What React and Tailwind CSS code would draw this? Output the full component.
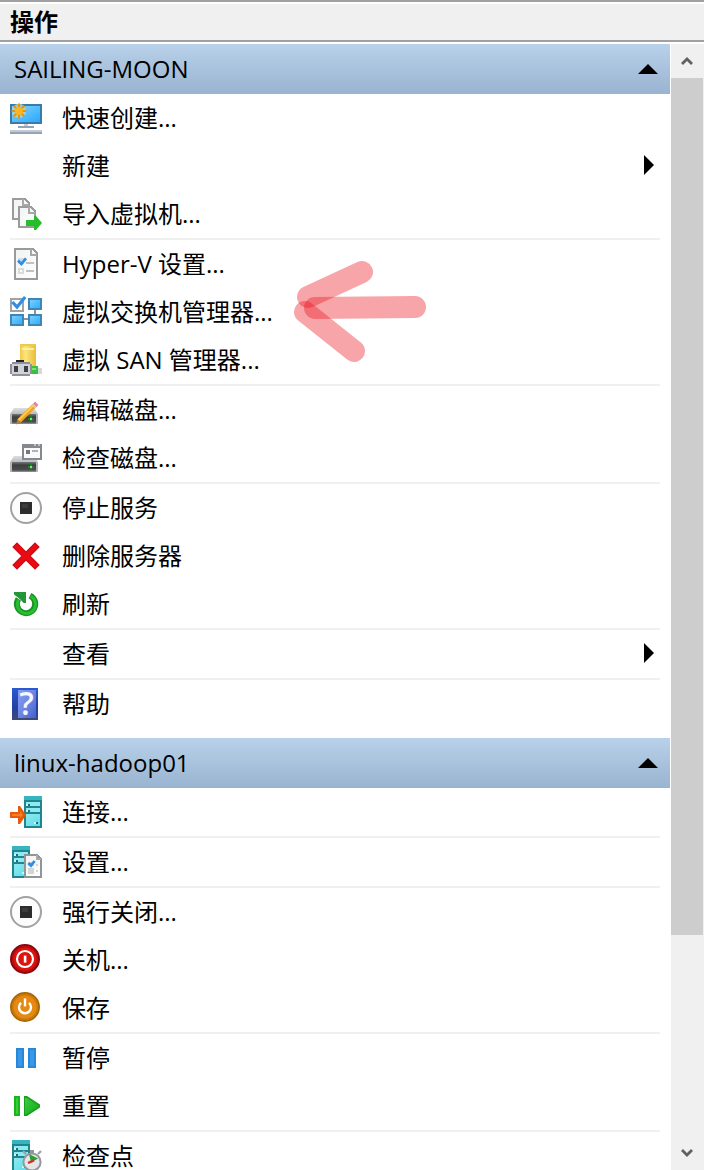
import React from "react";

const FONT =
  "font-['Open_Sans','Noto_Sans_CJK_SC',sans-serif]";

function Icon({ children, smooth }) {
  return (
    <svg
      viewBox="0 0 16 16"
      className="size-8 overflow-visible"
      aria-hidden="true"
      shapeRendering={smooth ? "auto" : "crispEdges"}
    >
      {children}
    </svg>
  );
}

function Gradients() {
  return (
    <svg className="absolute size-0" aria-hidden="true">
      <defs>
        <linearGradient id="screen" x1="0" y1="0" x2="1" y2="1">
          <stop offset="0" stopColor="#8ad4fb" />
          <stop offset="0.45" stopColor="#5ac0fd" />
          <stop offset="1" stopColor="#2aa9ff" />
        </linearGradient>
        <linearGradient id="gold" x1="0" y1="0" x2="1" y2="0">
          <stop offset="0" stopColor="#f0c94a" />
          <stop offset="0.35" stopColor="#fbe57c" />
          <stop offset="1" stopColor="#e9bc36" />
        </linearGradient>
        <linearGradient id="diskFront" x1="0" y1="0" x2="0" y2="1">
          <stop offset="0" stopColor="#77797b" />
          <stop offset="0.3" stopColor="#3c3e40" />
          <stop offset="0.8" stopColor="#4a4c4e" />
          <stop offset="1" stopColor="#9a9c9e" />
        </linearGradient>
        <linearGradient id="diskTop" x1="0" y1="0" x2="0" y2="1">
          <stop offset="0" stopColor="#dcdee0" />
          <stop offset="1" stopColor="#b9bcbf" />
        </linearGradient>
        <linearGradient id="paper" x1="0" y1="0" x2="1" y2="1">
          <stop offset="0" stopColor="#f1f2f2" />
          <stop offset="1" stopColor="#ffffff" />
        </linearGradient>
        <linearGradient id="book" x1="0" y1="0" x2="1" y2="1">
          <stop offset="0" stopColor="#8a9df0" />
          <stop offset="0.5" stopColor="#6d86e4" />
          <stop offset="1" stopColor="#3f62cf" />
        </linearGradient>
        <linearGradient id="spine" x1="0" y1="0" x2="0" y2="1">
          <stop offset="0" stopColor="#2a5bd0" />
          <stop offset="0.6" stopColor="#2240a4" />
          <stop offset="1" stopColor="#404a70" />
        </linearGradient>
        <linearGradient id="cyan" x1="0" y1="0" x2="1" y2="1">
          <stop offset="0" stopColor="#8deaf1" />
          <stop offset="1" stopColor="#5fdde8" />
        </linearGradient>
        <linearGradient id="go" x1="0" y1="0" x2="1" y2="1">
          <stop offset="0" stopColor="#3fca45" />
          <stop offset="1" stopColor="#0fae12" />
        </linearGradient>
      </defs>
    </svg>
  );
}

function Check({ d, width = 1.4 }) {
  return (
    <path d={d} fill="none" stroke="#2f8fe4" strokeWidth={width} shapeRendering="auto" />
  );
}

function Server({ x }) {
  return (
    <g transform={`translate(${x} 0)`} shapeRendering="crispEdges">
      <rect width="9" height="16" fill="#22858d" />
      <rect width="9" height="2" fill="#35b5c0" />
      <rect x="1" y="3" width="7" height="2" fill="#8deaf1" />
      <rect x="1" y="6" width="7" height="2" fill="#8deaf1" />
      <rect x="1" y="9" width="7" height="6" fill="url(#cyan)" />
      <path d="M2 4h1v1H2zM2 7h1v1H2zM6 13h1v1H6z" fill="#1b6d78" />
      <path d="M1 4h1v1H1zM1 7h1v1H1zM5 13h1v1H5z" fill="#c6fafc" />
    </g>
  );
}

function Disk() {
  return (
    <>
      <path d="M2 7h10l2 3H0z" fill="url(#diskTop)" shapeRendering="auto" />
      <rect y="10" width="14" height="5" fill="url(#diskFront)" />
      <path d="M0 10h1v5H0zM13 10h1v5h-1z" fill="#b4b7ba" />
      <rect x="9" y="12" width="3" height="1" fill="#27792b" />
      <rect x="10" y="11" width="1" height="3" fill="#27792b" />
      <rect x="10" y="12" width="1" height="1" fill="#59ff5c" />
    </>
  );
}

function QuickCreateIcon() {
  return (
    <Icon>
      <rect y="1" width="16" height="10" fill="#3a7ca6" />
      <rect x="1" y="2" width="14" height="8" fill="url(#screen)" />
      <g shapeRendering="auto">
        <circle cx="4.500" cy="4.500" r="3.600" fill="#b4d3c8" opacity=".8" />
        <path
          d="M4.500 .8v7.400M.8 4.500h7.400M1.900 1.900l5.200 5.200M7.100 1.900L1.900 7.100"
          stroke="#e3930f"
          strokeWidth="1"
        />
        <circle cx="4.500" cy="4.500" r="2" fill="#fbb51f" />
      </g>
      <rect x="7" y="11" width="2" height="1" fill="#c5cdd6" />
      <rect x="4" y="12" width="8" height="1" fill="#94a3b8" />
      <rect y="14" width="16" height="1" fill="#c2cbd3" />
      <rect y="15" width="16" height="1" fill="#94a3b8" />
    </Icon>
  );
}

function ImportIcon() {
  return (
    <Icon>
      <path d="M1.500 .5h6l2 2v8h-8z" fill="url(#paper)" stroke="#9b9b9b" />
      <path d="M6.500 .5v3h3" fill="none" stroke="#a8a8a8" />
      <path d="M4.500 4.500h6l2 2v8h-8z" fill="url(#paper)" stroke="#9b9b9b" />
      <path d="M9.500 4.500v3h3" fill="none" stroke="#a8a8a8" />
      <path d="M8 11h4V9h1l3 3.500-3 3.500h-1v-2H8z" fill="#25bd2a" shapeRendering="auto" />
    </Icon>
  );
}

function ChecklistIcon() {
  return (
    <Icon>
      <path d="M2.500 .5h9l2 2v13h-11z" fill="url(#paper)" stroke="#999b9b" />
      <path d="M10.500 .5v3h3" fill="none" stroke="#a5a7a7" />
      <path d="M4 5h3v3H4zM4 10h3v3H4z" fill="#dadcdc" />
      <rect x="5" y="11" width="1" height="1" fill="#fff" />
      <path d="M8 7h4v1H8zM8 11h4v1H8z" fill="#c0c2c2" />
      <Check d="M4 6.300l1.700 1.700L8 5.200" />
    </Icon>
  );
}

function SwitchIcon() {
  return (
    <Icon>
      <path d="M7 11h2v1H7zM12 7h1v2h-1z" fill="#8c959c" />
      <rect x=".5" y="1.500" width="6" height="6" fill="#fff" stroke="#a2a2a2" />
      <rect x="9.500" y="1.500" width="6" height="5" fill="url(#screen)" stroke="#3d86b5" />
      <rect x=".5" y="9.500" width="6" height="5" fill="url(#screen)" stroke="#3d86b5" />
      <rect x="9.500" y="9.500" width="6" height="5" fill="url(#screen)" stroke="#3d86b5" />
      <Check d="M1.200 3l2.300 2.500L7.600 .5" width={1.6} />
    </Icon>
  );
}

function SanIcon() {
  return (
    <Icon>
      <rect x="5" width="8" height="11" fill="url(#gold)" />
      <rect x="5" width="8" height="1" fill="#ecca4c" />
      <rect x="6" y="2" width="6" height="1" fill="#fff0a4" />
      <rect x="3" y="8" width="4" height="1" fill="#222" />
      <path d="M1 9h9v1h1v5h-1v1H1v-1H0v-5h1z" fill="#8f9197" />
      <path d="M1 10h9v5H1z" fill="#d0d2d8" />
      <path d="M2 11h2v3H2zM7 11h2v3H7z" fill="#3c3f43" />
      <rect x="11" y="11" width="3" height="4" fill="#3fbd43" />
      <rect x="11" y="12" width="2" height="1" fill="#7be07e" />
      <rect x="14" y="12" width="2" height="3" fill="#d4dbd5" />
    </Icon>
  );
}

function EditDiskIcon() {
  return (
    <Icon>
      <Disk />
      <g shapeRendering="auto">
        <path d="M4.500 13.500l7.800-7.800" stroke="#eda324" strokeWidth="2.400" />
        <path d="M4.200 13.200l7.800-7.800" stroke="#ffcb4a" strokeWidth="1" />
        <path d="M3.700 12.700l1.600 1.600L3 15.200z" fill="#b87942" />
        <path d="M11.700 6.300l1-1" stroke="#d0ccd0" strokeWidth="2.400" />
        <path d="M12.400 5.600l1-1" stroke="#f0818d" strokeWidth="2.400" />
      </g>
    </Icon>
  );
}

function InspectDiskIcon() {
  return (
    <Icon>
      <Disk />
      <rect x="6" y="1" width="10" height="8" fill="#85898e" />
      <rect x="7" y="3" width="8" height="5" fill="#fafafa" />
      <path d="M12 1h1v1h-1zM14 1h1v1h-1z" fill="#bfc3c6" />
      <rect x="8" y="4" width="2" height="2" fill="#74777b" />
      <rect x="11" y="4" width="3" height="1" fill="#b0b3b5" />
    </Icon>
  );
}

function StopIcon() {
  return (
    <Icon smooth>
      <circle cx="8" cy="8" r="7.500" fill="#fcfcfc" stroke="#a2a2a2" />
      <rect x="5" y="5" width="6" height="6" fill="#2c2c2c" />
      <rect x="6" y="6" width="3" height="2" fill="#3c3c3c" />
    </Icon>
  );
}

function DeleteIcon() {
  return (
    <Icon smooth>
      <path d="M2.300 2.300l11.400 11.400M13.700 2.300L2.300 13.700" stroke="#d40b12" strokeWidth="3.400" />
      <path d="M2.800 2.800l10.400 10.400M13.200 2.800L2.800 13.200" stroke="#ea0b14" strokeWidth="2" />
    </Icon>
  );
}

function RefreshIcon() {
  return (
    <Icon smooth>
      <path d="M10 3.800a4.600 4.600 0 1 1-5.800 1.600" fill="none" stroke="#1b9328" strokeWidth="3" />
      <path d="M10.400 4.100a4.600 4.600 0 1 1-6.200 1.800" fill="none" stroke="#24c02e" strokeWidth="1.400" />
      <path d="M2 2h6v5.500H6.800L5.400 6 4 4.800 2 3.200z" fill="#23963a" />
    </Icon>
  );
}

function HelpIcon() {
  return (
    <Icon smooth>
      <rect x="1" width="13" height="16" fill="url(#spine)" />
      <rect x="4" y="1" width="9" height="14" fill="url(#book)" />
      <text
        x="8.300"
        y="13.500"
        fontSize="16"
        textAnchor="middle"
        fill="#f5f7ff"
        className="font-['Open_Sans',sans-serif] font-semibold"
      >
        ?
      </text>
    </Icon>
  );
}

function ConnectIcon() {
  return (
    <Icon>
      <Server x={7} />
      <path d="M0 8h4V5h1l3 4.500L5 14H4v-3H0z" fill="#e55a0c" shapeRendering="auto" />
      <path d="M1 9h4V7.500l1.500 2L5 11v-1H1z" fill="#ff7a1f" shapeRendering="auto" />
    </Icon>
  );
}

function VmSettingsIcon() {
  return (
    <Icon>
      <Server x={1} />
      <path d="M7.500 4.500h6l2 2v9h-8z" fill="url(#paper)" stroke="#929596" />
      <path d="M13.500 4.500v2h2" fill="none" stroke="#a8abab" />
      <path d="M9 8h3v2H9zM9 11h3v3H9zM13 9h1v1h-1zM13 12h1v1h-1z" fill="#d4d6d6" />
      <Check d="M9.200 8.500l1.300 1.300L12.300 7.500" />
    </Icon>
  );
}

function ShutDownIcon() {
  return (
    <Icon smooth>
      <circle cx="7.500" cy="7.500" r="7" fill="#dd130e" stroke="#870711" />
      <circle cx="7.500" cy="7.500" r="6.200" fill="none" stroke="#b60c0f" strokeWidth=".8" />
      <circle cx="7.500" cy="7.500" r="4" fill="none" stroke="#fff" strokeWidth="1.100" />
      <rect x="6.900" y="5.800" width="1.300" height="3.500" fill="#fff" />
    </Icon>
  );
}

function SaveIcon() {
  return (
    <Icon smooth>
      <circle cx="7.500" cy="7.500" r="7" fill="#e48912" stroke="#a8680b" />
      <circle cx="7.500" cy="7.500" r="6.200" fill="none" stroke="#cd7709" strokeWidth=".8" />
      <path d="M5.500 5.400a3 3 0 1 0 4 0" fill="none" stroke="#fff" strokeWidth="1.200" />
      <rect x="6.900" y="3.200" width="1.200" height="4" fill="#fff" />
    </Icon>
  );
}

function PauseIcon() {
  return (
    <Icon>
      <path d="M3 3h4v10H3zM9 3h4v10H9z" fill="#2787d9" />
      <path d="M4 4h2v8H4zM10 4h2v8h-2z" fill="#3a98e8" />
    </Icon>
  );
}

function ResetIcon() {
  return (
    <Icon smooth>
      <path d="M2 3h3v10H2z" fill="#18b51c" />
      <path d="M3 4h1v8H3z" fill="#35cd3a" />
      <path d="M7 3h1.500L15 7.200v1.600L8.500 13H7z" fill="#1b9f20" />
      <path d="M7.500 4h.8L14 7.600v.8L8.300 12h-.8z" fill="url(#go)" />
    </Icon>
  );
}

function CheckpointIcon() {
  return (
    <Icon smooth>
      <Server x={1} />
      <path d="M6.500 5.500L8 7M15.500 5.500L14 7" stroke="#9da3a6" strokeWidth="1.200" />
      <rect x="10" y="5" width="2" height="1.500" fill="#8f9598" />
      <circle cx="11" cy="11" r="4.300" fill="#e4e6e7" stroke="#94999c" />
      <path d="M9.500 7l4.500 2.300-3.500 2z" fill="#2f9c34" />
      <path d="M9 11.500l3-1.300" fill="none" stroke="#cc3328" strokeWidth="1.200" />
    </Icon>
  );
}

function PointerArrow() {
  return (
    <svg
      viewBox="290 258 140 108"
      className="pointer-events-none absolute top-1/2 left-[290px] z-10 h-[108px] w-[140px] -translate-y-1/2"
      fill="none"
      stroke="#ea1620"
      strokeOpacity=".385"
      strokeWidth="22"
      strokeLinecap="round"
      aria-hidden="true"
    >
      <path d="M362 272L308 297" />
      <path d="M415 307L315 308" />
      <path d="M305 312L354 351" />
    </svg>
  );
}

const sections = [
  {
    title: "SAILING-MOON",
    groups: [
      [
        { label: "快速创建...", icon: QuickCreateIcon },
        { label: "新建", submenu: true },
        { label: "导入虚拟机...", icon: ImportIcon },
      ],
      [
        { label: "Hyper-V 设置...", icon: ChecklistIcon },
        { label: "虚拟交换机管理器...", icon: SwitchIcon, marked: true },
        { label: "虚拟 SAN 管理器...", icon: SanIcon },
      ],
      [
        { label: "编辑磁盘...", icon: EditDiskIcon },
        { label: "检查磁盘...", icon: InspectDiskIcon },
      ],
      [
        { label: "停止服务", icon: StopIcon },
        { label: "删除服务器", icon: DeleteIcon },
        { label: "刷新", icon: RefreshIcon },
      ],
      [{ label: "查看", submenu: true }],
      [{ label: "帮助", icon: HelpIcon }],
    ],
  },
  {
    title: "linux-hadoop01",
    groups: [
      [{ label: "连接...", icon: ConnectIcon }],
      [{ label: "设置...", icon: VmSettingsIcon }],
      [
        { label: "强行关闭...", icon: StopIcon },
        { label: "关机...", icon: ShutDownIcon },
        { label: "保存", icon: SaveIcon },
      ],
      [
        { label: "暂停", icon: PauseIcon },
        { label: "重置", icon: ResetIcon },
      ],
      [{ label: "检查点", icon: CheckpointIcon }],
    ],
  },
];

function ActionRow({ label, icon: Glyph, submenu, marked }) {
  return (
    <li className="relative">
      <button type="button" className="flex h-12 w-full items-center text-left">
        <span className="mr-5 size-8 shrink-0">{Glyph && <Glyph />}</span>
        <span className="flex-1 whitespace-nowrap">{label}</span>
        {submenu && (
          <svg viewBox="0 0 10 20" className="mr-1.5 mb-0.5 h-5 w-2.5" aria-hidden="true">
            <path d="M0 0l10 10L0 20z" />
          </svg>
        )}
      </button>
      {marked && (
        <div className="absolute inset-y-0 -left-2.5">
          <PointerArrow />
        </div>
      )}
    </li>
  );
}

function Section({ title, groups }) {
  return (
    <section className="pb-2.5">
      <h2>
        <button
          type="button"
          aria-expanded="true"
          className="flex h-[50px] w-full items-center justify-between bg-linear-to-b from-[#b9d1ea] to-[#99b4d1] pr-3 pl-3.5 text-left"
        >
          {title}
          <svg viewBox="0 0 20 10" className="h-2.5 w-5" aria-hidden="true">
            <path d="M10 0l10 10H0z" />
          </svg>
        </button>
      </h2>
      <div className="divide-y-2 divide-[#f0f0f0] px-2.5">
        {groups.map((rows, i) => (
          <ul key={i}>
            {rows.map((row) => (
              <ActionRow key={row.label} {...row} />
            ))}
          </ul>
        ))}
      </div>
    </section>
  );
}

function ScrollButton({ label, d }) {
  return (
    <button
      type="button"
      aria-label={label}
      className="flex h-[34px] shrink-0 items-center justify-center pr-0.5"
    >
      <svg viewBox="0 0 12 10" className="h-2.5 w-3" aria-hidden="true">
        <path d={d} fill="none" stroke="#606060" strokeWidth="2.800" />
      </svg>
    </button>
  );
}

export default function App() {
  return (
    <main className={`${FONT} flex h-screen flex-col bg-white text-2xl text-black`}>
      <Gradients />
      <header className="mb-0.5 shrink-0 border-y-2 border-[#a0a0a0] bg-white pt-0.5">
        <h1 className="flex h-9 items-center bg-[#f0f0f0] px-2.5 font-bold">操作</h1>
      </header>
      <div className="flex min-h-0 flex-1">
        <div className="min-w-0 flex-1 overflow-y-auto [scrollbar-width:none]">
          {sections.map((section) => (
            <Section key={section.title} {...section} />
          ))}
        </div>
        <div className="ml-px flex w-[33px] shrink-0 flex-col bg-[#f0f0f0]">
          <ScrollButton label="向上滚动" d="M1 8l5-5 5 5" />
          <div className="flex-1 pr-px">
            <div className="h-[81%] bg-[#cdcdcd]" />
          </div>
          <ScrollButton label="向下滚动" d="M1 2l5 5 5-5" />
        </div>
      </div>
    </main>
  );
}
